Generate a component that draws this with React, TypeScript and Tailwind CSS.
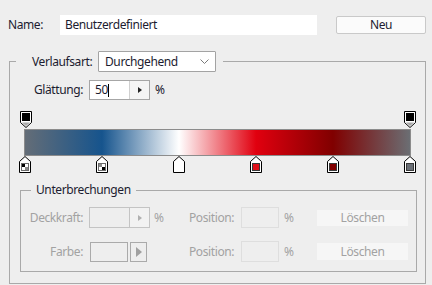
import React from "react";

type Stop = { pos: number; color?: string; icon?: "fg" | "bg" };

const colorStops: Stop[] = [
  { pos: 0, icon: "fg" },
  { pos: 0.2, icon: "bg" },
  { pos: 0.4, color: "#ffffff" },
  { pos: 0.6, color: "#e0101a" },
  { pos: 0.8, color: "#820000" },
  { pos: 1, color: "#6b7077" },
];

const OpacityStop = () => (
  <svg width="12" height="17" viewBox="0 0 12 17">
    <path d="M0.5 0.5H11.5V11.5L6 16.5L0.5 11.5Z" fill="#ffffff" stroke="#000000" />
    <rect x="2" y="2" width="8" height="8" fill="#000000" />
    <path d="M2 11.5H10L6 15Z" fill="#a8a8a8" />
  </svg>
);

const ColorStop = ({ stop }: { stop: Stop }) => (
  <svg width="12" height="17" viewBox="0 0 12 17">
    <path d="M6 0.5L11.5 5.5V16.5H0.5V5.5Z" fill="#ffffff" stroke="#000000" />
    {stop.icon === "fg" && (
      <>
        <rect x="2.5" y="7.5" width="7" height="7" fill="#ffffff" stroke="#6b6b6b" />
        <rect x="3" y="8" width="3" height="3" fill="#000000" />
        <rect x="6" y="11" width="3" height="3" fill="#8a8a8a" />
      </>
    )}
    {stop.icon === "bg" && (
      <>
        <rect x="2.5" y="7.5" width="7" height="7" fill="#ffffff" stroke="#6b6b6b" />
        <rect x="3" y="8" width="3" height="3" fill="#8a8a8a" />
        <rect x="6" y="11" width="3" height="3" fill="#000000" />
      </>
    )}
    {stop.color && (
      <rect x="2.5" y="7.5" width="7" height="7" fill={stop.color} stroke={stop.color === "#ffffff" ? "#ffffff" : "#3a3a3a"} />
    )}
  </svg>
);

const Spinner = ({ disabled }: { disabled?: boolean }) => (
  <div
    className={
      disabled
        ? "flex h-[21px] w-[61px] border border-[#c4c4c4]"
        : "flex h-[20px] w-[61px] border border-[#a6a6a6] bg-white"
    }
  >
    <div className="flex flex-1 items-center pl-[5px]">
      {!disabled && (
        <>
          <span>50</span>
          <span className="h-[13px] w-px bg-black" />
        </>
      )}
    </div>
    <div
      className={
        disabled
          ? "flex w-[20px] items-center justify-center border-l border-[#c4c4c4] bg-[#f2f2f2]"
          : "flex w-[20px] items-center justify-center border-l border-[#d0d0d0] bg-[#f5f5f5]"
      }
    >
      <svg width="4" height="6" viewBox="0 0 4 6">
        <path d="M0 0L4 3L0 6Z" fill={disabled ? "#b0b0b0" : "#222222"} />
      </svg>
    </div>
  </div>
);

const App: React.FC = () => {
  return (
    <div className="h-[285px] w-[432px] overflow-hidden bg-[#eeeeee] text-[12px] leading-[16px] tracking-[-0.4px] text-[#1c1c30] font-['Noto_Sans',sans-serif]">
      <div className="flex items-center pl-[8px] pt-[15px]">
        <span className="w-[52px]">Name:</span>
        <div className="flex h-[20px] w-[257px] items-center bg-white pl-[5px]">Benutzerdefiniert</div>
        <button className="ml-[19px] h-[18px] w-[90px] rounded-[2px] border border-[#c9c9c9] bg-[#fbfbfb] text-center">
          Neu
        </button>
      </div>

      <fieldset className="ml-[9px] mt-[16px] w-[417px] border border-[#a9a9a9] pb-[11px]">
        <legend className="ml-[6px] flex items-center pl-[16px] pr-[7px]">
          <span className="w-[66px]">Verlaufsart:</span>
          <div className="flex h-[21px] w-[118px] items-center justify-between rounded-[1px] border border-[#a3a3a3] bg-white pl-[6px] pr-[6px]">
            <span>Durchgehend</span>
            <svg width="9" height="5" viewBox="0 0 9 5">
              <path d="M0.5 0.5L4.5 4.5L8.5 0.5" fill="none" stroke="#7a7a7a" />
            </svg>
          </div>
        </legend>

        <div className="mt-[8px] flex items-center pl-[24px]">
          <span className="w-[55px]">Glättung:</span>
          <Spinner />
          <span className="ml-[5px]">%</span>
        </div>

        <div className="ml-[14px] mt-[11px] w-[387px]">
          <div className="relative h-[18px]">
            <div className="absolute left-[-4px] top-0">
              <OpacityStop />
            </div>
            <div className="absolute left-[380px] top-0">
              <OpacityStop />
            </div>
          </div>
          <div className="h-[27px] border border-[#8c8c8c] bg-[linear-gradient(to_right,#646d77_0%,#16548d_20%,#ffffff_40%,#e1000f_60%,#800000_80%,#6b6e73_100%)]" />
          <div className="relative h-[17px]">
            {colorStops.map((s) => (
              <div key={s.pos} className="absolute top-0" style={{ left: Math.round(1 + 385 * s.pos - 6) }}>
                <ColorStop stop={s} />
              </div>
            ))}
          </div>
        </div>

        <fieldset className="ml-[10px] mt-[9px] w-[397px] border border-[#a9a9a9] pb-[9px] text-[#a2a2a2]">
          <legend className="ml-[10px] px-[5px] text-[#1c1c30]">Unterbrechungen</legend>

          <div className="mt-[9px] flex items-center">
            <span className="w-[68px] pr-[6px] text-right">Deckkraft:</span>
            <Spinner disabled />
            <span className="ml-[4px] w-[35px]">%</span>
            <span className="w-[52px]">Position:</span>
            <div className="h-[21px] w-[38px] border border-[#dedede]" />
            <span className="ml-[5px] w-[33px]">%</span>
            <div className="flex h-[16px] w-[91px] items-center justify-center bg-[#f6f6f6]">Löschen</div>
          </div>

          <div className="mt-[13px] flex items-center">
            <span className="w-[68px] pr-[6px] text-right">Farbe:</span>
            <div className="ml-px h-[20px] w-[38px] border border-[#aaaaaa]" />
            <div className="ml-[2px] flex h-[20px] w-[17px] items-center justify-center border border-[#aaaaaa]">
              <svg width="6" height="10" viewBox="0 0 6 10">
                <path d="M0 0L6 5L0 10Z" fill="#a0a0a0" />
              </svg>
            </div>
            <span className="w-[42px]" />
            <span className="w-[52px]">Position:</span>
            <div className="h-[21px] w-[38px] border border-[#dedede]" />
            <span className="ml-[5px] w-[33px]">%</span>
            <div className="flex h-[17px] w-[91px] items-center justify-center bg-[#f6f6f6]">Löschen</div>
          </div>
        </fieldset>
      </fieldset>
    </div>
  );
};

export default App;
